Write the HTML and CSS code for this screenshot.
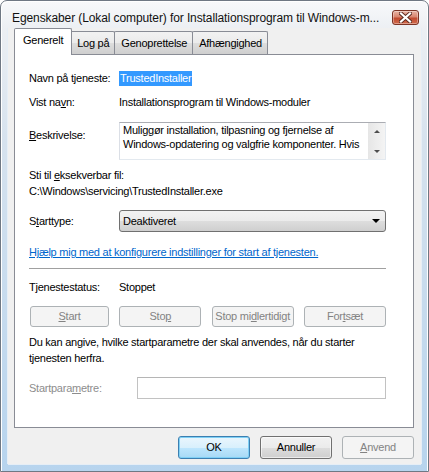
FILE: index.html
```html
<!DOCTYPE html>
<html lang="da">
<head>
<meta charset="utf-8">
<title>Egenskaber</title>
<link rel="stylesheet" href="styles.css">
</head>
<body>
<div class="window">
  <div class="titlebar">
    <span class="title">Egenskaber (Lokal computer) for Installationsprogram til Windows-m...</span>
    <div class="close" aria-label="Luk">
      <svg width="13" height="11" viewBox="0 0 13 11"><path d="M2 1.5 L11 9.5 M11 1.5 L2 9.5" stroke="#5a2a20" stroke-width="4" stroke-linecap="square"/><path d="M2 1.5 L11 9.5 M11 1.5 L2 9.5" stroke="#ffffff" stroke-width="2.2" stroke-linecap="square"/></svg>
    </div>
  </div>
  <div class="client">
    <div class="tabs">
      <div class="tab active">Generelt</div>
      <div class="tab">Log på</div>
      <div class="tab">Genoprettelse</div>
      <div class="tab">Afhængighed</div>
    </div>
    <div class="panel">
      <div class="row r-name">
        <span>Navn på tjeneste:</span>
        <span><span class="selected">TrustedInstaller</span></span>
      </div>
      <div class="row r-display">
        <span>Vist na<u>v</u>n:</span>
        <span>Installationsprogram til Windows-moduler</span>
      </div>
      <div class="row r-desc">
        <span class="desc-label"><u>B</u>eskrivelse:</span>
        <div class="textarea">
          <div class="textarea-text">Muliggør installation, tilpasning og fjernelse af<br>Windows-opdatering og valgfrie komponenter. Hvis</div>
          <div class="scrollbar">
            <span class="arrow up"></span>
            <span class="arrow down"></span>
          </div>
        </div>
      </div>
      <div class="line r-pathlabel">Sti til <u>e</u>ksekverbar fil:</div>
      <div class="line r-path">C:\Windows\servicing\TrustedInstaller.exe</div>
      <div class="row r-start">
        <span>S<u>t</u>arttype:</span>
        <div class="select">
          <span>Deaktiveret</span>
          <span class="caret"></span>
        </div>
      </div>
      <a class="line link" href="#">Hjælp mig med at konfigurere indstillinger for start af tjenesten.</a>
      <div class="separator"></div>
      <div class="row r-status">
        <span>Tjenestestatus:</span>
        <span>Stoppet</span>
      </div>
      <div class="svc-buttons">
        <div class="btn disabled"><u>S</u>tart</div>
        <div class="btn disabled">Sto<u>p</u></div>
        <div class="btn disabled">Stop mi<u>d</u>lertidigt</div>
        <div class="btn disabled">For<u>t</u>sæt</div>
      </div>
      <p class="note">Du kan angive, hvilke startparametre der skal anvendes, når du starter tjenesten herfra.</p>
      <div class="row r-params">
        <span class="muted">Startpara<u>m</u>etre:</span>
        <div class="input disabled-input"></div>
      </div>
    </div>
    <div class="actions">
      <div class="btn action default">OK</div>
      <div class="btn action">Annuller</div>
      <div class="btn action disabled"><u>A</u>nvend</div>
    </div>
  </div>
</div>
</body>
</html>
```

FILE: styles.css
```css
* { box-sizing: border-box; }

html, body {
  margin: 0;
  padding: 0;
  background: #ffffff;
}

body {
  font-family: "Liberation Sans", Arial, sans-serif;
  font-size: 11px;
  letter-spacing: -0.25px;
  color: #000;
}

.window {
  width: 429px;
  height: 472px;
  border: 1px solid #6f7884;
  border-radius: 7px 7px 0 0;
  background: linear-gradient(180deg, #f8f9fb 0px, #eceff3 28px, #d6e2ee 140px, #b7d4ee 100%);
  display: flex;
  flex-direction: column;
  box-shadow: inset 1px 1px 0 #ffffff, inset -1px 0 0 #ffffff;
}

.titlebar {
  height: 27px;
  flex: none;
  display: flex;
  align-items: center;
  justify-content: space-between;
  padding: 6px 9px 0 11px;
}

.title {
  font-size: 12px;
  letter-spacing: -0.1px;
  white-space: nowrap;
  color: #111;
}

.close {
  width: 27px;
  height: 15px;
  border: 1px solid #7b3325;
  border-radius: 3px;
  background: linear-gradient(180deg, #e9b3a4 0%, #d98670 45%, #c14a30 55%, #cf6a4c 100%);
  display: flex;
  align-items: center;
  justify-content: center;
  box-shadow: inset 0 0 0 1px rgba(255,255,255,0.35);
}

.client {
  flex: 1;
  margin: 0 7px 7px 7px;
  background: #f0f0f0;
  padding: 0 7px 0 6px;
  display: flex;
  flex-direction: column;
  box-shadow: 1px 0 0 #e6eef6, -1px 0 0 #e6eef6, 0 1px 0 #e6eef6;
}

.tabs {
  display: flex;
  align-items: flex-end;
  height: 26px;
  position: relative;
  z-index: 1;
}

.tab {
  height: 23px;
  padding: 0 5px 0 6px;
  border: 1px solid #898c95;
  border-bottom: none;
  margin-left: -1px;
  background: linear-gradient(180deg, #f2f2f2 0%, #ebebeb 50%, #dddddd 51%, #cfcfcf 100%);
  display: flex;
  align-items: center;
  line-height: 15px;
  border-radius: 2px 2px 0 0;
}

.tab.active {
  height: 27px;
  margin-bottom: -1px;
  margin-left: 0;
  margin-right: -2px;
  padding: 0 8px 3px 8px;
  background: #ffffff;
  position: relative;
  z-index: 2;
}

.tab.active + .tab { margin-left: 0; }

.panel {
  height: 374px;
  flex: none;
  background: #ffffff;
  border: 1px solid #898c95;
  padding: 0 27px 0 14px;
  display: flex;
  flex-direction: column;
}

.row {
  display: grid;
  grid-template-columns: 90px 1fr;
  align-items: center;
  line-height: 15px;
}

.line {
  line-height: 15px;
  display: block;
}

.r-name { margin-top: 16px; }
.r-display { margin-top: 9px; }
.r-desc { margin-top: 12px; align-items: start; }
.desc-label { padding-top: 6px; }
.r-pathlabel { margin-top: 8px; }
.r-path { margin-top: 1px; }
.r-start { margin-top: 11px; }
.link { margin-top: 13px; color: #0066cc; text-decoration: underline; }
.r-status { margin-top: 10px; }
.r-params { margin-top: 11px; grid-template-columns: 108px 1fr; }

.selected {
  background: #3399ff;
  color: #ffffff;
  padding: 0 1px;
  display: inline-block;
  line-height: 15px;
}

.textarea {
  height: 38px;
  border: 1px solid #abadb3;
  border-left-color: #dbdfe6;
  border-right-color: #e3e9ef;
  border-bottom-color: #e3e9ef;
  display: flex;
  background: #fff;
}

.textarea-text {
  flex: 1;
  padding: 1px 0 0 3px;
  line-height: 13.5px;
  white-space: nowrap;
  overflow: hidden;
}

.scrollbar {
  width: 17px;
  flex: none;
  background: linear-gradient(90deg, #e6e6e6, #f4f4f4);
  display: flex;
  flex-direction: column;
  justify-content: space-between;
  align-items: center;
  padding: 7px 0 6px 0;
}

.arrow {
  width: 0;
  height: 0;
  border-left: 3px solid transparent;
  border-right: 3px solid transparent;
}

.arrow.up { border-bottom: 3px solid #4d4d4d; }
.arrow.down { border-top: 3px solid #4d4d4d; }

.select {
  height: 22px;
  border: 1px solid #707070;
  border-radius: 3px;
  background: linear-gradient(180deg, #f2f2f2 0%, #ebebeb 50%, #dddddd 51%, #cfcfcf 100%);
  display: flex;
  align-items: center;
  justify-content: space-between;
  padding: 0 4px 0 3px;
}

.caret {
  width: 0;
  height: 0;
  border-left: 4px solid transparent;
  border-right: 4px solid transparent;
  border-top: 4px solid #000;
  margin-right: 1px;
}

.separator {
  margin-top: 8px;
  height: 2px;
  border-top: 1px solid #a0a0a0;
  border-bottom: 1px solid #ffffff;
}

.svc-buttons {
  margin-top: 11px;
  display: grid;
  grid-template-columns: 79px 82px 82px 82px;
  justify-content: space-between;
  padding-left: 1px;
}

.btn {
  height: 21px;
  border: 1px solid #707070;
  border-radius: 3px;
  background: linear-gradient(180deg, #f2f2f2 0%, #ebebeb 50%, #dddddd 51%, #cfcfcf 100%);
  display: flex;
  align-items: center;
  justify-content: center;
  line-height: 15px;
  box-shadow: inset 0 0 0 1px rgba(255,255,255,0.6);
}

.btn.disabled {
  border-color: #adb2b5;
  background: #f4f4f4;
  color: #838383;
  box-shadow: none;
}

.note {
  margin: 7px 0 0 0;
  line-height: 16px;
}

.muted { color: #8d8d8d; }

.input {
  height: 22px;
  border: 1px solid #c2c2c2;
  border-top-color: #b5b5b5;
  background: #fff;
}

.actions {
  margin-top: 8px;
  display: flex;
  justify-content: flex-end;
  gap: 10px;
}

.btn.action {
  width: 72px;
  height: 23px;
}

.btn.default {
  border-color: #3c7fb1;
  background: linear-gradient(180deg, #eaf6fd 0%, #d9f0fc 50%, #bee6fd 51%, #a7d9f5 100%);
  box-shadow: inset 0 0 0 1px #7fd0f5;
}
```
